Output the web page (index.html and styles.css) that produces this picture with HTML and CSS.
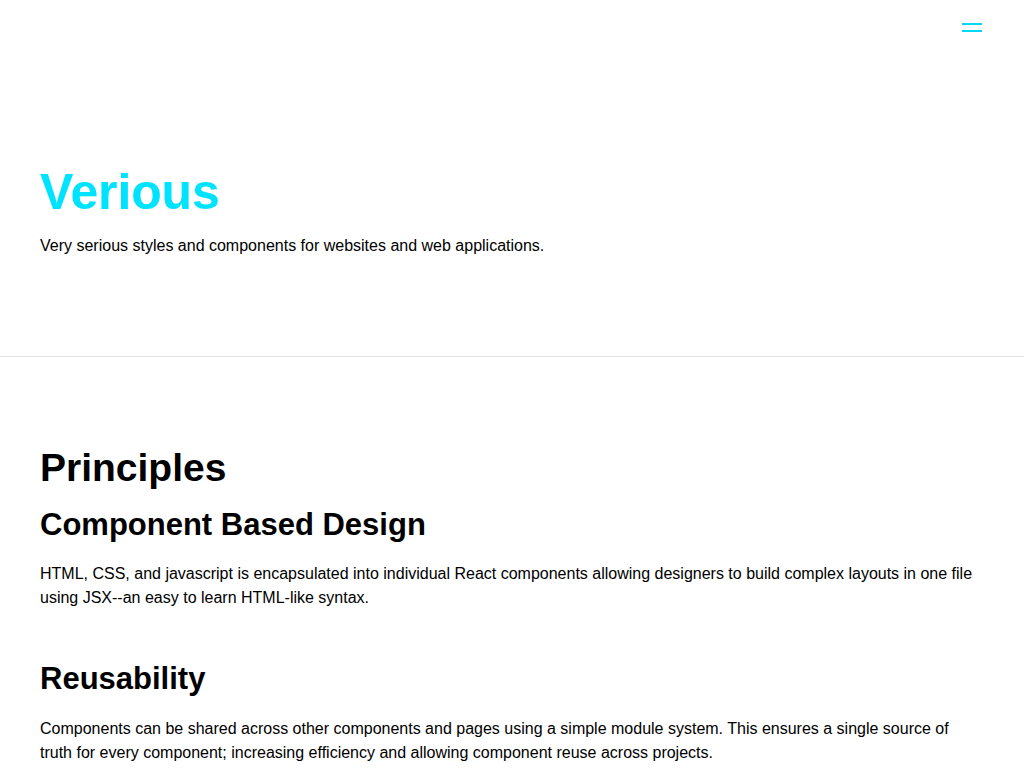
FILE: index.html
```html
<!DOCTYPE html>
<html lang="en">
<head>
<meta charset="utf-8">
<title>Verious</title>
<link rel="stylesheet" href="styles.css">
</head>
<body>
<header class="topbar">
  <button class="menu-btn" aria-label="Menu">
    <span class="menu-line"></span>
    <span class="menu-line"></span>
  </button>
</header>
<section class="hero">
  <h1 class="hero-title">Verious</h1>
  <p class="hero-text">Very serious styles and components for websites and web applications.</p>
</section>
<main class="content">
  <h2 class="section-title">Principles</h2>
  <h3 class="item-title">Component Based Design</h3>
  <p class="item-text">HTML, CSS, and javascript is encapsulated into individual React components allowing designers to build complex layouts in one file using JSX--an easy to learn HTML-like syntax.</p>
  <h3 class="item-title item-title-spaced">Reusability</h3>
  <p class="item-text">Components can be shared across other components and pages using a simple module system. This ensures a single source of truth for every component; increasing efficiency and allowing component reuse across projects.</p>
</main>
</body>
</html>
```

FILE: styles.css
```css
* { box-sizing: border-box; }
html, body {
  margin: 0;
  padding: 0;
  background: #fff;
  color: #000;
  font-family: "Liberation Sans", Arial, Helvetica, sans-serif;
  font-size: 16px;
  line-height: 24px;
}
.topbar {
  display: flex;
  justify-content: flex-end;
  padding: 23px 42px 0 40px;
  height: 40px;
}
.menu-btn {
  display: flex;
  flex-direction: column;
  gap: 5px;
  width: 20px;
  padding: 0;
  border: 0;
  background: transparent;
  cursor: pointer;
}
.menu-line {
  display: block;
  width: 20px;
  height: 2px;
  background: #00d8f5;
}
.hero {
  padding: 122px 40px 98px;
  border-bottom: 1px solid #e3e3e3;
}
.hero-title {
  margin: 0;
  font-size: 50px;
  line-height: 60px;
  font-weight: 700;
  color: #00e3ff;
  letter-spacing: -0.15px;
}
.hero-text {
  margin: 12px 0 0;
}
.content {
  padding: 87px 40px 40px;
}
.section-title {
  margin: 0;
  font-size: 39px;
  line-height: 48px;
  font-weight: 700;
}
.item-title {
  margin: 13px 0 0;
  font-size: 31px;
  line-height: 40px;
  font-weight: 700;
}
.item-title-spaced {
  margin-top: 49px;
}
.item-text {
  margin: 17px 0 0;
  max-width: 944px;
}
.item-title-spaced + .item-text {
  margin-top: 18px;
}
```
